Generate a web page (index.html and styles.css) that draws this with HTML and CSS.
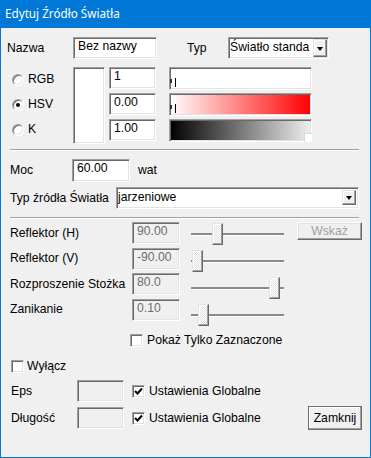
FILE: index.html
```
<!DOCTYPE html>
<html>

<head>
    <meta charset="utf-8">
    <title>Edytuj Źródło Światła</title>
    <link rel="stylesheet" href="styles.css">
</head>

<body>
    <div class="window">
        <div class="titlebar">Edytuj Źródło Światła</div>

        <div class="client">
            <div class="row name-row">
                <span class="name-label">Nazwa</span>
                <div class="edit name-edit">Bez nazwy</div>
                <span class="typ-label">Typ</span>
                <div class="combo typ-combo">
                    <span class="combo-text">Światło standa</span>
                    <span class="combo-btn"><span class="arrow"></span></span>
                </div>
            </div>

            <div class="row color-row">
                <div class="radios">
                    <div class="radio-item"><span class="radio"></span>RGB</div>
                    <div class="radio-item"><span class="radio checked"></span>HSV</div>
                    <div class="radio-item"><span class="radio"></span>K</div>
                </div>
                <div class="swatch"></div>
                <div class="color-edits">
                    <div class="edit color-edit">1</div>
                    <div class="edit color-edit">0.00</div>
                    <div class="edit color-edit">1.00</div>
                </div>
                <div class="color-bars">
                    <div class="bar bar-white">
                        <span class="mark mark-short"></span>
                        <span class="mark mark-long"></span>
                    </div>
                    <div class="bar bar-red">
                        <span class="mark mark-short"></span>
                        <span class="mark mark-long"></span>
                    </div>
                    <div class="bar bar-black">
                        <span class="corner"></span>
                    </div>
                </div>
            </div>

            <div class="sep"></div>

            <div class="row moc-row">
                <span class="moc-label">Moc</span>
                <div class="edit moc-edit">60.00</div>
                <span class="unit">wat</span>
            </div>

            <div class="row source-row">
                <span class="source-label">Typ źródła Światła</span>
                <div class="combo source-combo">
                    <span class="combo-text">jarzeniowe</span>
                    <span class="combo-btn"><span class="arrow"></span></span>
                </div>
            </div>

            <div class="sep sep-second"></div>

            <div class="spot-section">
                <div class="spot-fields">
                    <div class="spot-row">
                        <span class="spot-label">Reflektor (H)</span>
                        <div class="edit spot-edit disabled">90.00</div>
                    </div>
                    <div class="spot-row">
                        <span class="spot-label">Reflektor (V)</span>
                        <div class="edit spot-edit disabled">-90.00</div>
                    </div>
                    <div class="spot-row">
                        <span class="spot-label">Rozproszenie Stożka</span>
                        <div class="edit spot-edit disabled">80.0</div>
                    </div>
                    <div class="spot-row">
                        <span class="spot-label">Zanikanie</span>
                        <div class="edit spot-edit disabled">0.10</div>
                    </div>
                </div>

                <div class="sliders">
                    <div class="slider"><span class="track"></span><span class="thumb" style="left: 21px"></span></div>
                    <div class="slider"><span class="track"></span><span class="thumb" style="left: 1px"></span></div>
                    <div class="slider"><span class="track"></span><span class="thumb" style="left: 78px"></span></div>
                    <div class="slider"><span class="track"></span><span class="thumb" style="left: 7px"></span></div>
                </div>

                <button type="button" class="btn wskaz-btn" disabled>Wskaż</button>
            </div>

            <div class="row show-row">
                <span class="check"></span>
                <span class="check-text">Pokaż Tylko Zaznaczone</span>
            </div>

            <div class="row off-row">
                <span class="check"></span>
                <span class="check-text">Wyłącz</span>
            </div>

            <div class="row eps-row">
                <span class="opt-label">Eps</span>
                <div class="edit opt-edit disabled"></div>
                <span class="check checked">
                    <svg width="9" height="9" viewBox="0 0 9 9"><polyline points="1,4 3.5,6.5 8,1.5" fill="none" stroke="#000" stroke-width="2"/></svg>
                </span>
                <span class="check-text">Ustawienia Globalne</span>
            </div>

            <div class="row len-row">
                <span class="opt-label">Długość</span>
                <div class="edit opt-edit disabled"></div>
                <span class="check checked">
                    <svg width="9" height="9" viewBox="0 0 9 9"><polyline points="1,4 3.5,6.5 8,1.5" fill="none" stroke="#000" stroke-width="2"/></svg>
                </span>
                <span class="check-text">Ustawienia Globalne</span>
                <button type="button" class="btn close-btn">Zamknij</button>
            </div>
        </div>
    </div>
</body>

</html>
```

FILE: styles.css
```
body {
    margin: 0;
    font-family: "Liberation Sans", Arial, sans-serif;
    font-size: 12.2px;
    line-height: 15px;
    color: #000000;
    background-color: #f0f0f0;
}

.window {
    box-sizing: border-box;
    width: 371px;
    height: 458px;
    border: 1px solid #0078d7;
    border-top: none;
    background-color: #f0f0f0;
}

.titlebar {
    height: 28px;
    padding-left: 4px;
    background-color: #0078d7;
    color: #ffffff;
    font-family: "Noto Sans", sans-serif;
    font-size: 11.7px;
    line-height: 26px;
}

.client {
    display: flex;
    flex-direction: column;
}

.row {
    display: flex;
    align-items: center;
}

/* sunken controls */
.edit,
.swatch,
.bar,
.combo,
.check,
.radio {
    box-sizing: border-box;
    border: 1px solid;
    border-color: #a0a0a0 #ffffff #ffffff #a0a0a0;
    box-shadow: inset 1px 1px #696969, inset -1px -1px #e3e3e3;
    background-color: #ffffff;
}

.edit {
    height: 22px;
    padding: 1px 4px 0;
    white-space: nowrap;
    overflow: hidden;
}

.edit.disabled {
    background-color: #f0f0f0;
    color: #6d6d6d;
}

.btn {
    box-sizing: border-box;
    padding: 0;
    font-family: inherit;
    font-size: 12.2px;
    border: 1px solid;
    border-color: #ffffff #696969 #696969 #ffffff;
    box-shadow: inset -1px -1px #a0a0a0, inset 1px 1px #e3e3e3;
    background-color: #f0f0f0;
    color: #000000;
}

.btn:disabled {
    color: #a0a0a0;
}

/* name row */
.name-row {
    margin-top: 9px;
    height: 22px;
    padding-left: 6px;
}

.name-label {
    width: 66px;
}

.name-edit {
    width: 84px;
}

.typ-label {
    width: 41px;
    margin-left: 30px;
}

.combo {
    display: flex;
    height: 22px;
    padding: 1px;
}

.typ-combo {
    width: 101px;
}

.combo-text {
    flex: 1;
    overflow: hidden;
    white-space: nowrap;
    padding-top: 1px;
}

.combo-btn {
    box-sizing: border-box;
    width: 14px;
    display: flex;
    align-items: center;
    justify-content: center;
    border: 1px solid;
    border-color: #e3e3e3 #696969 #696969 #e3e3e3;
    box-shadow: inset -1px -1px #a0a0a0, inset 1px 1px #ffffff;
    background-color: #f0f0f0;
}

.arrow {
    width: 0;
    height: 0;
    border-left: 3.5px solid transparent;
    border-right: 3.5px solid transparent;
    border-top: 4px solid #000000;
    margin-top: 1px;
}

/* colour block */
.color-row {
    margin-top: 8px;
    height: 77px;
    align-items: flex-start;
}

.radios {
    box-sizing: border-box;
    width: 72px;
    padding-left: 11px;
    display: flex;
    flex-direction: column;
}

.radio-item {
    height: 25px;
    display: flex;
    align-items: center;
}

.radio {
    width: 12px;
    height: 12px;
    margin-right: 4px;
    border-radius: 50%;
    display: flex;
    align-items: center;
    justify-content: center;
}

.radio.checked::after {
    content: "";
    width: 4px;
    height: 4px;
    border-radius: 50%;
    background-color: #000000;
}

.swatch {
    width: 32px;
    height: 77px;
}

.color-edits {
    margin-left: 4px;
    display: flex;
    flex-direction: column;
    gap: 4px;
}

.color-edit {
    width: 47px;
}

.color-bars {
    margin-left: 13px;
    display: flex;
    flex-direction: column;
    gap: 3px;
}

.bar {
    position: relative;
    width: 143px;
    height: 23px;
}

.bar-red {
    background: linear-gradient(to right, #ffffff, #ff0000);
}

.bar-black {
    background: linear-gradient(to right, #000000, #f0f0f0);
}

.mark {
    position: absolute;
    background-color: #000000;
}

.mark-short {
    left: 0;
    top: 11px;
    width: 2px;
    height: 4px;
    background-color: #303030;
}

.mark-long {
    left: 5px;
    top: 10px;
    width: 1px;
    height: 9px;
}

.corner {
    position: absolute;
    right: -1px;
    bottom: -1px;
    width: 7px;
    height: 8px;
    border-left: 1px solid #d8d8d8;
    border-top: 1px solid #d8d8d8;
    background-color: #ffffff;
}

.sep {
    margin: 5px 0 0 9px;
    width: 349px;
    height: 0;
    border-top: 1px solid #a0a0a0;
    border-bottom: 1px solid #ffffff;
}

.sep-second {
    margin-top: 8px;
}

/* power and source */
.moc-row {
    margin-top: 8px;
    height: 23px;
    padding-left: 9px;
}

.moc-label {
    width: 62px;
}

.moc-edit {
    width: 58px;
    height: 23px;
}

.unit {
    margin-left: 8px;
}

.source-row {
    margin-top: 5px;
    height: 22px;
    padding-left: 9px;
}

.source-label {
    width: 106px;
}

.source-combo {
    width: 243px;
}

.source-combo .combo-btn {
    margin: 1px 1px 2px 0;
}

/* spot section */
.spot-section {
    margin-top: 3px;
    height: 100px;
    padding-left: 9px;
    display: flex;
    align-items: flex-start;
}

.spot-fields {
    display: flex;
    flex-direction: column;
    gap: 3.6px;
}

.spot-row {
    height: 22px;
    display: flex;
    align-items: center;
}

.spot-label {
    width: 122px;
}

.spot-edit {
    width: 48px;
}

.sliders {
    margin-left: 11px;
    padding-top: 1px;
    display: flex;
    flex-direction: column;
    gap: 5px;
}

.slider {
    position: relative;
    width: 93px;
    height: 22px;
}

.track {
    position: absolute;
    left: 0;
    right: 0;
    top: 10px;
    height: 2px;
    background-color: #8a8a8a;
    box-shadow: 0 1px #ffffff;
}

.thumb {
    position: absolute;
    top: 0;
    box-sizing: border-box;
    width: 11px;
    height: 22px;
    border: 1px solid;
    border-color: #e3e3e3 #696969 #696969 #e3e3e3;
    box-shadow: inset -1px -1px #a0a0a0, inset 1px 1px #ffffff;
    background: repeating-conic-gradient(#ffffff 0 25%, #e0e0e0 0 50%) 0 0 / 2px 2px;
}

.wskaz-btn {
    margin-left: 13px;
    width: 65px;
    height: 18px;
}

/* check boxes */
.check {
    width: 13px;
    height: 13px;
    display: flex;
    align-items: center;
    justify-content: center;
}

.check-text {
    margin-left: 4px;
}

.show-row {
    margin-top: 12px;
    height: 13px;
    padding-left: 129px;
}

.off-row {
    margin-top: 13px;
    height: 13px;
    padding-left: 10px;
}

.off-row .check-text {
    margin-left: 3px;
}

.eps-row {
    margin-top: 7px;
    height: 22px;
    padding-left: 10px;
}

.len-row {
    margin-top: 5px;
    height: 22px;
    padding-left: 10px;
}

.opt-label {
    width: 66px;
}

.opt-edit {
    width: 47px;
}

.opt-edit + .check {
    margin-left: 8px;
}

.close-btn {
    margin-left: auto;
    margin-right: 8px;
    width: 54px;
    height: 24px;
    border: 1px solid #6d6d6d;
    box-shadow: inset -1px -1px #a0a0a0, inset 1px 1px #ffffff;
}
```
